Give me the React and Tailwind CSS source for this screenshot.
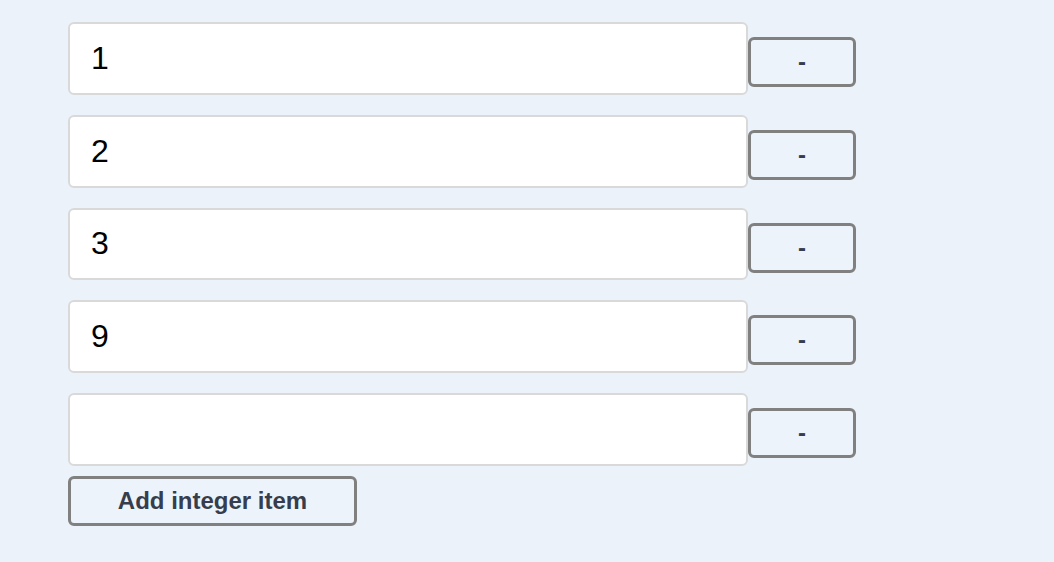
import React, { useState } from "react";

export default function App() {
  const [items, setItems] = useState(["1", "2", "3", "9", ""]);

  const removeItem = (idx) => {
    setItems(items.filter((_, i) => i !== idx));
  };

  return (
    <div className="min-h-screen w-full bg-[#ebf2fa] pl-[68px] pt-[22px] font-['Liberation_Sans',Arial,sans-serif]">
      <div className="flex flex-col gap-[20px]">
        {items.map((item, idx) => (
          <div key={idx} className="flex items-start">
            <input
              type="text"
              value={item}
              onChange={(e) => {
                const next = [...items];
                next[idx] = e.target.value;
                setItems(next);
              }}
              className="h-[72.75px] w-[680px] rounded-[6px] border-2 border-[#d9d9d9] bg-white pl-[21px] text-[32px] text-black outline-none"
            />
            <button
              onClick={() => removeItem(idx)}
              className="mt-[15px] h-[50px] w-[108px] rounded-[6px] border-[3px] border-[#808080] bg-[#edf3fa] text-[24px] font-bold text-[#363d4d]"
            >
              -
            </button>
          </div>
        ))}
      </div>
      <button
        onClick={() => setItems([...items, ""])}
        className="mt-[10px] h-[50px] w-[289px] rounded-[6px] border-[3px] border-[#808080] bg-[#edf3fa] text-[24px] font-bold text-[#363d4d]"
      >
        Add integer item
      </button>
    </div>
  );
}
